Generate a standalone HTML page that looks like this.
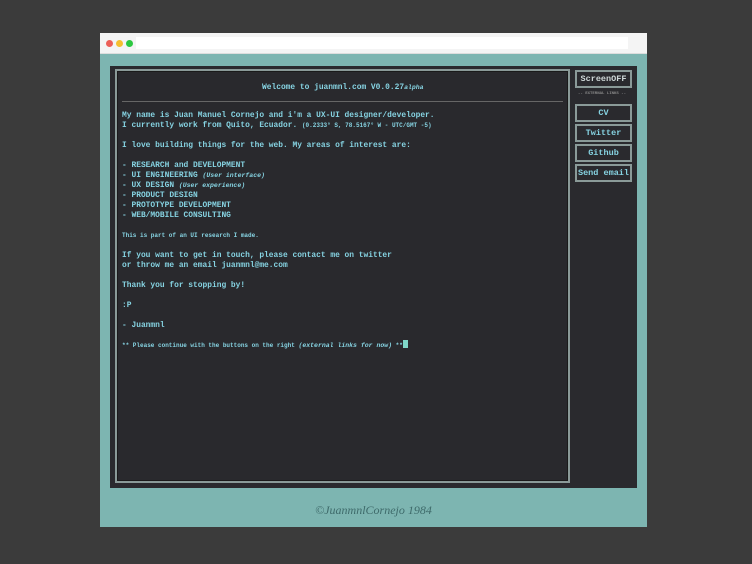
<!DOCTYPE html><html><head><style>
body{margin:0;width:752px;height:564px;background:#3b3b3b;position:relative;overflow:hidden;font-family:"Liberation Mono",monospace;}
.win{position:absolute;left:100px;top:33px;width:547px;height:494px;background:#7db5b1;}
.bar{position:absolute;left:0;top:0;width:547px;height:20px;background:#f4f4f4;border-bottom:1px solid #ddd}
.url{position:absolute;left:36px;top:4px;width:492px;height:12px;background:#fff}
.d{position:absolute;top:7px;width:7px;height:7px;border-radius:50%}
.panel{position:absolute;left:10px;top:33px;width:527px;height:422px;background:#2a2a2e;}
.term{position:absolute;left:5px;top:3px;width:451px;height:410px;border:2px solid #8a9a98;box-shadow:inset 0 0 0 1px #1a1a1a;background:#29292d}
.t{position:absolute;color:#86d3e2;font-size:7.9px;font-weight:bold;white-space:pre;line-height:10px}
.s{font-size:6px}
.i{font-style:italic;font-size:6.5px}
.btn{position:absolute;left:465px;width:53px;height:14px;border:2px solid #8a9a98;color:#86d3e2;font-size:8.5px;font-weight:bold;text-align:center;line-height:14px;font-family:"Liberation Mono",monospace}
</style></head><body>
<div class="win">
<div class="bar"><div class="d" style="left:6px;background:#ec5f57"></div><div class="d" style="left:16px;background:#f5bf2f"></div><div class="d" style="left:26px;background:#2cc840"></div><div class="url"></div></div>
<div class="panel">
<div class="term">
<div class="t" style="left:145px;top:12px">Welcome to juanmnl.com V0.0.27<span class="i">alpha</span></div>
<div style="position:absolute;left:5px;top:30px;width:441px;height:1px;background:#666"></div>
<div class="t" style="left:5px;top:40px">My name is Juan Manuel Cornejo and i'm a UX-UI designer/developer.
I currently work from Quito, Ecuador. <span class="s">(0.2333° S, 78.5167° W - UTC/GMT -5)</span>

I love building things for the web. My areas of interest are:

- RESEARCH and DEVELOPMENT
- UI ENGINEERING <span class="i">(User interface)</span>
- UX DESIGN <span class="i">(User experience)</span>
- PRODUCT DESIGN
- PROTOTYPE DEVELOPMENT
- WEB/MOBILE CONSULTING</div>
<div class="t s" style="left:5px;top:160px">This is part of an UI research I made.</div>
<div class="t" style="left:5px;top:180px">If you want to get in touch, please contact me on twitter
or throw me an email juanmnl@me.com

Thank you for stopping by!

:P

- Juanmnl</div>
<div class="t s" style="left:5px;top:269px">** Please continue with the buttons on the right <span class="i">(external links for now)</span> **<span style="display:inline-block;width:5px;height:8px;background:#7fd6c8;vertical-align:-1px"></span></div>
</div>
<div class="btn" style="top:4px;color:#cfd8d8">ScreenOFF</div>
<div class="t" style="left:468px;top:23px;font-size:4px;color:#888">-- EXTERNAL LINKS --</div>
<div class="btn" style="top:38px">CV</div>
<div class="btn" style="top:58px">Twitter</div>
<div class="btn" style="top:78px">Github</div>
<div class="btn" style="top:98px">Send email</div>
</div>
<div style="position:absolute;left:0;width:547px;top:470px;text-align:center;color:#3e6a6a;font:italic 12px 'Liberation Serif',serif">©JuanmnlCornejo 1984</div>
</div>
</body></html>
